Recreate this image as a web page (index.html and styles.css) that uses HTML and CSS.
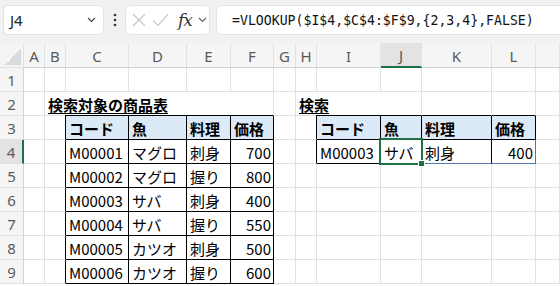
FILE: index.html
```html
<!DOCTYPE html>
<html lang="ja">

<head>
    <meta charset="UTF-8">
    <title>VLOOKUP</title>
    <link rel="stylesheet" href="styles.css">
</head>

<body>

    <!-- name box + formula bar -->
    <div class="bar">
        <div class="namebox">
            <span>J4</span>
            <svg class="chev" width="9" height="6" viewBox="0 0 9 6"><path d="M1 1 L4.5 4.5 L8 1" fill="none" stroke="#444" stroke-width="1.2"/></svg>
        </div>
        <div class="grip">
            <svg width="4" height="14" viewBox="0 0 4 14"><circle cx="2" cy="2" r="1.3" fill="#333"/><circle cx="2" cy="7" r="1.3" fill="#333"/><circle cx="2" cy="12" r="1.3" fill="#333"/></svg>
        </div>
        <div class="fbtns">
            <svg width="14" height="14" viewBox="0 0 14 14"><path d="M1 1 L13 13 M13 1 L1 13" stroke="#c6c6c6" stroke-width="1.2"/></svg>
            <svg width="17" height="14" viewBox="0 0 17 14"><path d="M1 7.5 L6 12.5 L16 1.5" fill="none" stroke="#c6c6c6" stroke-width="1.2"/></svg>
            <span class="fx">fx</span>
            <svg class="chev" width="9" height="6" viewBox="0 0 9 6"><path d="M1 1 L4.5 4.5 L8 1" fill="none" stroke="#666" stroke-width="1.1"/></svg>
        </div>
        <div class="formula">=VLOOKUP($I$4,$C$4:$F$9,{2,3,4},FALSE)</div>
    </div>

    <!-- worksheet -->
    <div class="sheet">
        <!-- column headers -->
        <div class="corner"><div class="tri"></div></div>
        <div class="ch">A</div><div class="ch">B</div><div class="ch">C</div><div class="ch">D</div>
        <div class="ch">E</div><div class="ch">F</div><div class="ch">G</div><div class="ch">H</div>
        <div class="ch">I</div><div class="ch active">J</div><div class="ch">K</div><div class="ch">L</div>
        <div class="ch"></div>

        <!-- 1 -->
        <div class="rh">1</div>
        <div class="c"></div><div class="c"></div><div class="c"></div><div class="c"></div><div class="c"></div><div class="c"></div>
        <div class="c"></div><div class="c"></div><div class="c"></div><div class="c"></div><div class="c"></div><div class="c"></div><div class="c"></div>

        <!-- 2 -->
        <div class="rh">2</div>
        <div class="c"></div>
        <div class="c title span4">検索対象の商品表</div>
        <div class="c bl-b"></div>
        <div class="c"></div>
        <div class="c title span2">検索</div>
        <div class="c bl-b"></div><div class="c bl-b"></div><div class="c bl-b"></div>
        <div class="c"></div>

        <!-- 3 -->
        <div class="rh">3</div>
        <div class="c"></div><div class="c bl-r"></div>
        <div class="c tb hd">コード</div><div class="c tb hd">魚</div><div class="c tb hd">料理</div><div class="c tb hd">価格</div>
        <div class="c"></div><div class="c bl-r"></div>
        <div class="c tb hd">コード</div><div class="c tb hd">魚</div><div class="c tb hd">料理</div><div class="c tb hd">価格</div>
        <div class="c"></div>

        <!-- 4 -->
        <div class="rh active">4</div>
        <div class="c"></div><div class="c bl-r"></div>
        <div class="c tb">M00001</div><div class="c tb">マグロ</div><div class="c tb">刺身</div><div class="c tb num">700</div>
        <div class="c"></div><div class="c bl-r"></div>
        <div class="c tb">M00003</div>
        <div class="c tb sel">サバ<span class="handle"></span></div>
        <div class="c tb spill-b">刺身</div>
        <div class="c tb num spill-b spill-r">400</div>
        <div class="c"></div>

        <!-- 5 -->
        <div class="rh">5</div>
        <div class="c"></div><div class="c bl-r"></div>
        <div class="c tb">M00002</div><div class="c tb">マグロ</div><div class="c tb">握り</div><div class="c tb num">800</div>
        <div class="c"></div><div class="c"></div><div class="c"></div><div class="c"></div><div class="c"></div><div class="c"></div><div class="c"></div>

        <!-- 6 -->
        <div class="rh">6</div>
        <div class="c"></div><div class="c bl-r"></div>
        <div class="c tb">M00003</div><div class="c tb">サバ</div><div class="c tb">刺身</div><div class="c tb num">400</div>
        <div class="c"></div><div class="c"></div><div class="c"></div><div class="c"></div><div class="c"></div><div class="c"></div><div class="c"></div>

        <!-- 7 -->
        <div class="rh">7</div>
        <div class="c"></div><div class="c bl-r"></div>
        <div class="c tb">M00004</div><div class="c tb">サバ</div><div class="c tb">握り</div><div class="c tb num">550</div>
        <div class="c"></div><div class="c"></div><div class="c"></div><div class="c"></div><div class="c"></div><div class="c"></div><div class="c"></div>

        <!-- 8 -->
        <div class="rh">8</div>
        <div class="c"></div><div class="c bl-r"></div>
        <div class="c tb">M00005</div><div class="c tb">カツオ</div><div class="c tb">刺身</div><div class="c tb num">500</div>
        <div class="c"></div><div class="c"></div><div class="c"></div><div class="c"></div><div class="c"></div><div class="c"></div><div class="c"></div>

        <!-- 9 -->
        <div class="rh">9</div>
        <div class="c"></div><div class="c bl-r"></div>
        <div class="c tb">M00006</div><div class="c tb">カツオ</div><div class="c tb">握り</div><div class="c tb num">600</div>
        <div class="c"></div><div class="c"></div><div class="c"></div><div class="c"></div><div class="c"></div><div class="c"></div><div class="c"></div>
    </div>

</body>

</html>
```

FILE: styles.css
```css
body {
    margin: 0;
    background-color: #fff;
    font-family: "Noto Sans CJK JP", sans-serif;
    overflow: hidden;
}

/* ---- formula bar ---- */

.bar {
    height: 43px;
    box-sizing: border-box;
    background-color: #f1f1f1;
    padding: 5px 0 0 3px;
    display: flex;
    align-items: flex-start;
}

.namebox,
.fbtns,
.formula {
    height: 30px;
    box-sizing: border-box;
    background-color: #fff;
    border: 1px solid #e3e3e3;
    border-radius: 5px;
    display: flex;
    align-items: center;
}

.namebox {
    width: 101px;
    padding: 0 7px 0 6px;
    justify-content: space-between;
    font-family: "Noto Sans", sans-serif;
    font-size: 15px;
    color: #222;
}

.grip {
    width: 21px;
    height: 30px;
    display: flex;
    align-items: center;
    justify-content: center;
}

.fbtns {
    width: 85px;
    padding: 0 2px 0 6px;
    gap: 6px;
}

.fx {
    font-family: "DejaVu Serif", serif;
    font-style: italic;
    font-size: 17px;
    color: #333;
    margin-left: 3px;
    letter-spacing: -1px;
}

.formula {
    flex: 1;
    margin-left: 6px;
    margin-right: -10px;
    padding-left: 15px;
    font-family: "DejaVu Sans Mono", monospace;
    font-size: 13.2px;
    color: #111;
}

/* ---- grid ---- */

.sheet {
    display: grid;
    grid-template-columns: 24px 21px 21px 63px 58px 44px 43px 22px 21px 64px 41px 70px 44px 1fr;
    grid-template-rows: 25px repeat(9, 24px);
}

.sheet > div {
    box-sizing: border-box;
    border-right: 1px solid #e1e1e1;
    border-bottom: 1px solid #e1e1e1;
    white-space: nowrap;
}

.corner {
    background-color: #f5f5f5;
    display: flex;
    align-items: flex-end;
    justify-content: flex-end;
    padding: 0 2px 2px 0;
}

.corner .tri {
    width: 16px;
    height: 16px;
    background: linear-gradient(to bottom right, transparent 50%, #dadada 50%);
}

.ch,
.rh {
    background-color: #f5f5f5;
    color: #5a5a5a;
    font-family: "Noto Sans", sans-serif;
    font-size: 15px;
    display: flex;
    align-items: center;
    justify-content: center;
}

.sheet > .ch {
    border-bottom-color: #d4d4d4;
    padding-top: 1px;
}

.sheet > .rh {
    border-right-color: #d4d4d4;
}

.sheet > .ch.active {
    background-color: #e3e3e3;
    border-bottom: 2px solid #1e7145;
}

.sheet > .rh.active {
    background-color: #e3e3e3;
    border-right: 2px solid #1e7145;
}

.c {
    font-size: 15px;
    color: #000;
    padding: 1px 3px 0;
    display: flex;
    align-items: center;
}

.title {
    font-weight: bold;
    text-decoration: underline;
    text-underline-offset: 2px;
}

/* titles run over the cells on their right, black line only under the tables */
.sheet > .span4 {
    grid-column: span 4;
    border-right: none;
    border-bottom: none;
    background: linear-gradient(to right, #e1e1e1 20px, #000 20px) bottom / 100% 1px no-repeat;
}

.sheet > .span2 {
    grid-column: span 2;
    border-right: none;
    border-bottom: none;
    background: linear-gradient(to right, #e1e1e1 20px, #000 20px) bottom / 100% 1px no-repeat;
}

.sheet > .tb {
    border-right-color: #000;
    border-bottom-color: #000;
}

.sheet > .bl-r {
    border-right-color: #000;
}

.sheet > .bl-b {
    border-bottom-color: #000;
}

.hd {
    background-color: #dce9f7;
    font-weight: bold;
}

.num {
    justify-content: flex-end;
    padding-right: 2px;
}

.sheet > .spill-b {
    border-bottom-color: #4f77b3;
}

.sheet > .spill-r {
    border-right-color: #4f77b3;
}

/* active cell */
.sel {
    position: relative;
}

.sel::after {
    content: "";
    position: absolute;
    left: -2px;
    top: -2px;
    right: -2px;
    bottom: -2px;
    border: 2px solid #1e7145;
}

.handle {
    position: absolute;
    right: -4px;
    bottom: -4px;
    width: 5px;
    height: 5px;
    background-color: #1e7145;
    border: 1px solid #fff;
    z-index: 1;
}
```
